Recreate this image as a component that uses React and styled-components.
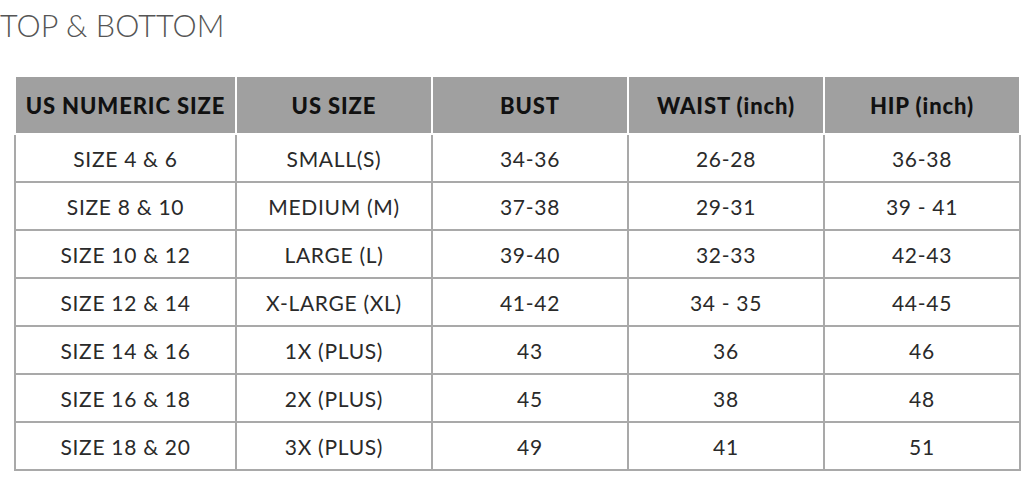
import React from "react";
import styled, { createGlobalStyle } from "styled-components";

const Global = createGlobalStyle`
  html, body { margin: 0; padding: 0; background: #fff; }
  body { font-family: "Lato", "Open Sans", sans-serif; }
`;

const Page = styled.div`
  width: 1024px;
  height: 490px;
  overflow: hidden;
  background: #fff;
`;

const Title = styled.h2`
  margin: 0;
  padding: 6px 0 0 0;
  height: 70px;
  box-sizing: border-box;
  font-family: "Lato", sans-serif;
  font-weight: 300;
  font-size: 30.5px;
  line-height: 38px;
  color: #555;
  letter-spacing: 0.1px;
`;

const Table = styled.table`
  margin-left: 14px;
  margin-top: 5px;
  width: 1007px;
  border-collapse: collapse;
  table-layout: fixed;
`;

const Th = styled.th`
  background: #a0a0a0;
  border: 2px solid #fff;
  height: 56px;
  padding: 0;
  font-family: "Lato", sans-serif;
  font-weight: 900;
  font-size: 22px;
  letter-spacing: 0.9px;
  color: #111;
  text-align: center;
  white-space: nowrap;
`;

const Td = styled.td`
  border: 2px solid #a9a9a9;
  height: 46px;
  padding: 0;
  font-family: "Lato", sans-serif;
  font-weight: 400;
  font-size: 21px;
  letter-spacing: 0.7px;
  color: #2a2a2a;
  text-align: center;
  white-space: nowrap;
`;

const headers = ["US NUMERIC SIZE", "US SIZE", "BUST", "WAIST (inch)", "HIP (inch)"];
const widths = [221, 196, 196, 196, 196];

const rows = [
  ["SIZE 4 & 6", "SMALL(S)", "34-36", "26-28", "36-38"],
  ["SIZE 8 & 10", "MEDIUM (M)", "37-38", "29-31", "39 - 41"],
  ["SIZE 10 & 12", "LARGE (L)", "39-40", "32-33", "42-43"],
  ["SIZE 12 & 14", "X-LARGE (XL)", "41-42", "34 - 35", "44-45"],
  ["SIZE 14 & 16", "1X (PLUS)", "43", "36", "46"],
  ["SIZE 16 & 18", "2X (PLUS)", "45", "38", "48"],
  ["SIZE 18 & 20", "3X (PLUS)", "49", "41", "51"],
];

export default function App() {
  return (
    <Page>
      <Global />
      <Title>TOP &amp; BOTTOM</Title>
      <Table>
        <colgroup>
          {widths.map((w, i) => (
            <col key={i} style={{ width: w }} />
          ))}
        </colgroup>
        <thead>
          <tr>
            {headers.map((h) => (
              <Th key={h}>{h}</Th>
            ))}
          </tr>
        </thead>
        <tbody>
          {rows.map((r, i) => (
            <tr key={i}>
              {r.map((c, j) => (
                <Td key={j}>{c}</Td>
              ))}
            </tr>
          ))}
        </tbody>
      </Table>
    </Page>
  );
}
